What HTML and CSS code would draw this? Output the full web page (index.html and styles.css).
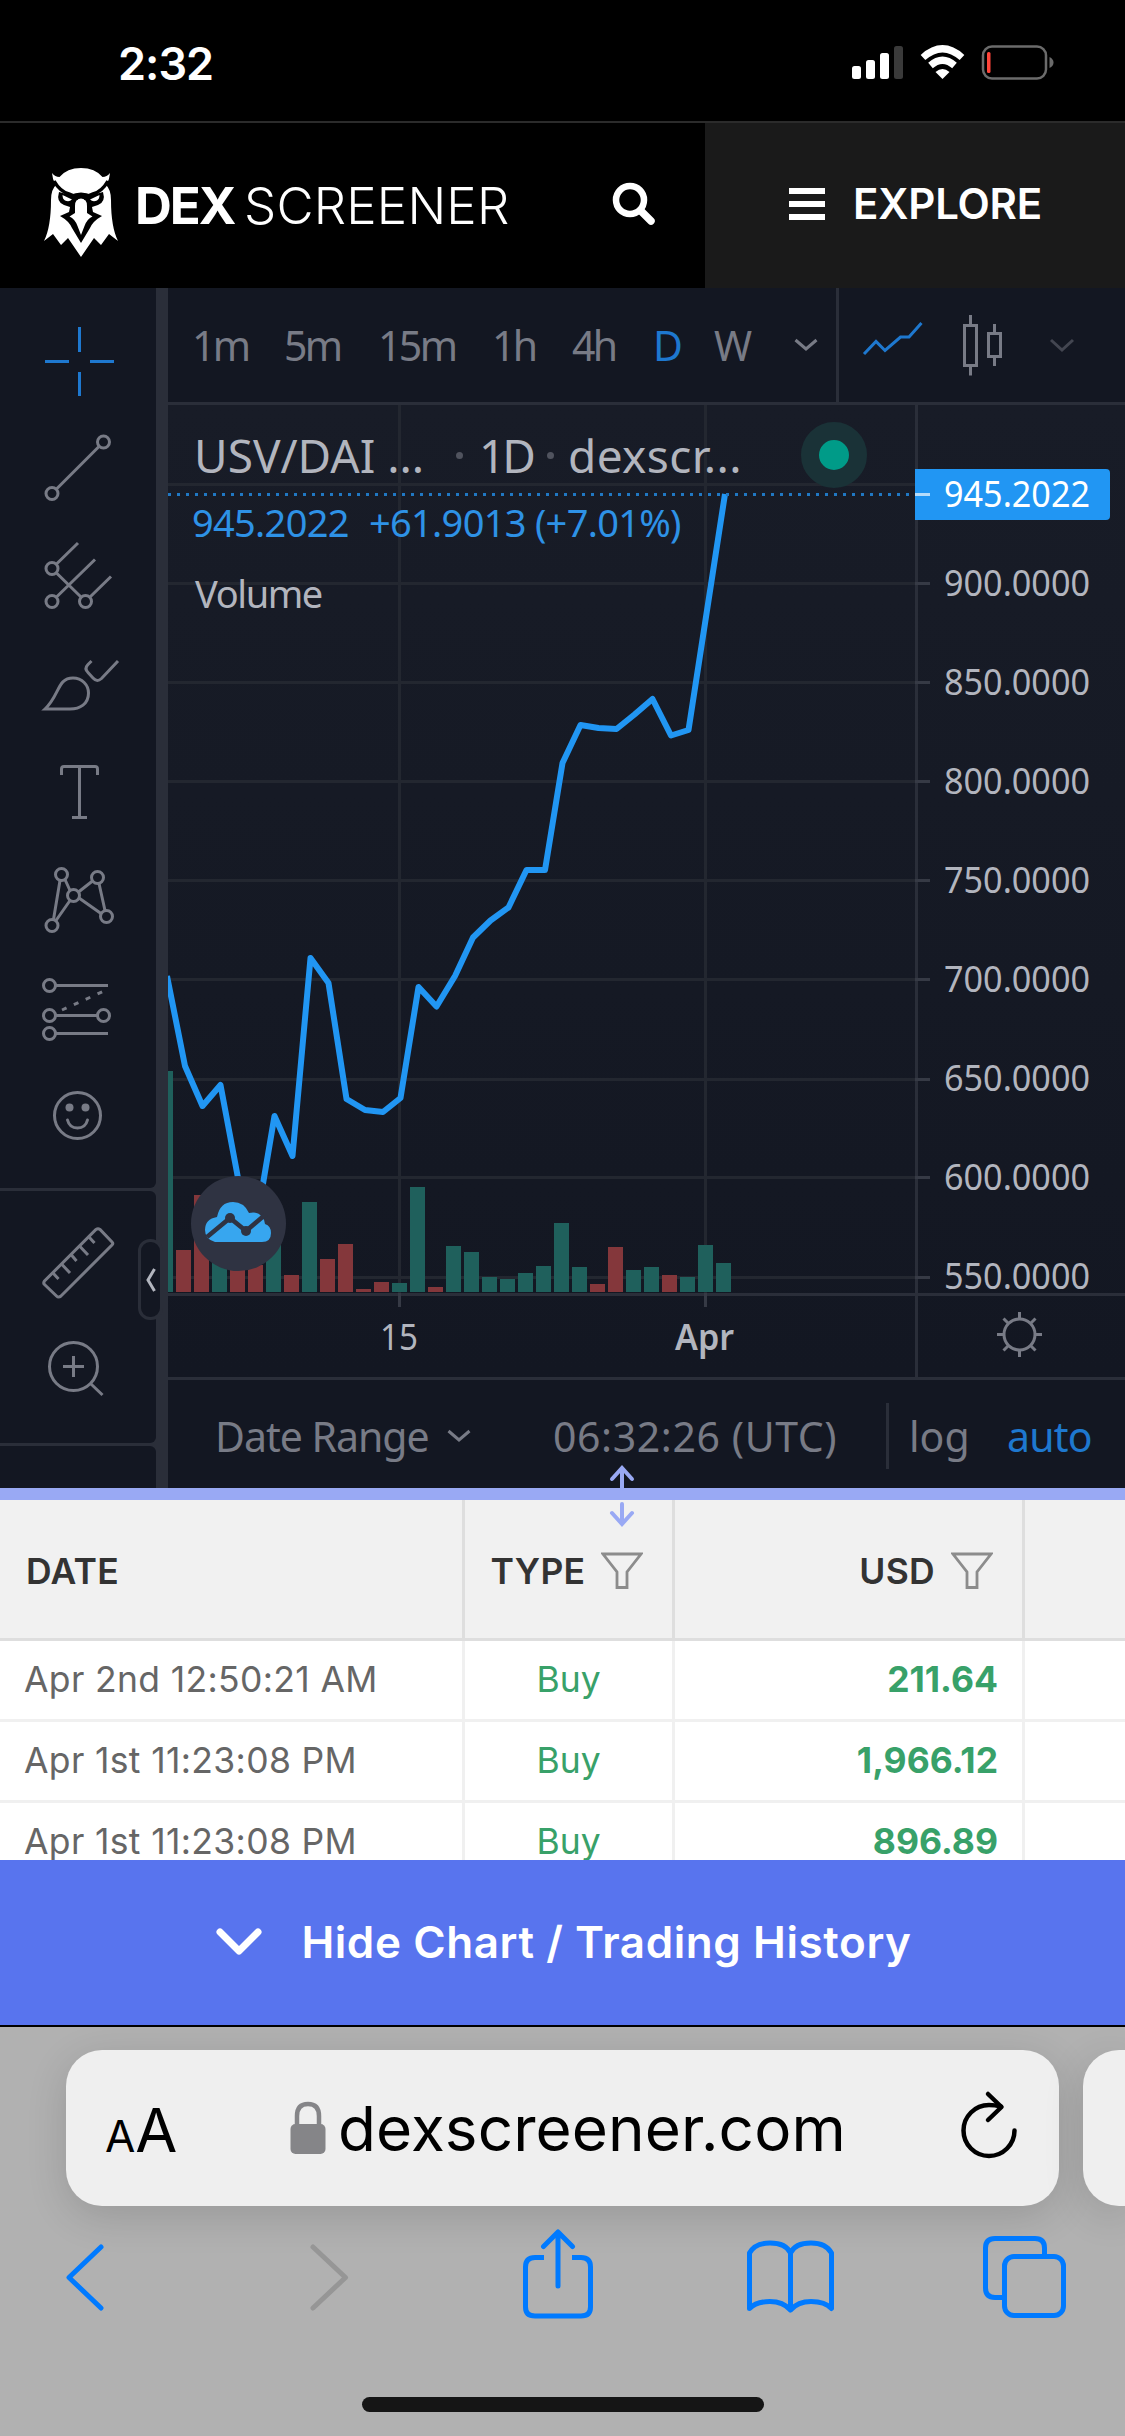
FILE: index.html
```html
<!DOCTYPE html>
<html lang="en">
<head>
    <meta charset="UTF-8">
    <meta name="viewport" content="width=device-width, initial-scale=1.0">
    <title>DEX Screener</title>
    <link rel="stylesheet" href="styles.css">
</head>
<body>

    <div class="status-bar">
        <span class="time">2:32</span>
        <svg class="status-icons" width="204" height="40" viewBox="850 44 204 40">
            <g fill="#fff">
                <rect x="852" y="67" width="9" height="13" rx="2.5"/>
                <rect x="866" y="61" width="9" height="19" rx="2.5"/>
                <rect x="880" y="54" width="9" height="26" rx="2.5"/>
                <rect x="894" y="47" width="9" height="33" rx="2.5" fill="#3a3a3a"/>
                <path d="M942.500 80 L935.500 73 Q942.500 67 949.500 73 Z"/>
            </g>
            <path d="M923 58.500 Q942.500 41 962 58.500" fill="none" stroke="#fff" stroke-width="7"/>
            <path d="M930.500 66.500 Q942.500 56 954.500 66.500" fill="none" stroke="#fff" stroke-width="7"/>
            <rect x="983" y="47.500" width="63" height="32" rx="9" fill="none" stroke="#6b6b6b" stroke-width="2.500"/>
            <rect x="987" y="53" width="3.500" height="21" rx="1.500" fill="#ff453a"/>
            <path d="M1049.500 58 Q1053.500 60 1053.500 63.500 Q1053.500 67 1049.500 69 Z" fill="#6b6b6b"/>
        </svg>
    </div>

    <header class="header">
        <svg class="owl" width="76" height="92" viewBox="43 166 76 92">
            <path d="M52 173 Q55 177 59.500 177 Q67 168 81 168 Q95 168 102.500 177 Q107 177 110 173 Q109 187 98 191.500 Q91 194 87 197 Q81 191.500 75 197 Q71 194 64 191.500 Q53 187 52 173 Z" fill="#fff"/>
            <path d="M57 184 Q62 193 70 196 L76 199 H86 L92 196 Q100 193 105 184 Q111 189 111 200 Q111 227 118 241 L109 234 L101 245 L94 238 L81 257 L68 238 L61 245 L53 234 L44 241 Q51 227 51 200 Q51 189 57 184 Z" fill="#fff"/>
            <path d="M59 192 Q56 202 64 205 L70 207 L69 212 L60 216 Q69 221 72 228 L81 243 L90 228 Q93 221 102 216 L93 212 L92 207 L98 205 Q106 202 103 192 L92 195 Q81 190 70 195 Z"/>
            <path d="M62.500 195 L72 199.500 Q69 202.500 65 200.500 Q62.500 199 62.500 195 Z M99.500 195 L90 199.500 Q93 202.500 97 200.500 Q99.500 199 99.500 195 Z" fill="#fff"/>
            <path d="M81 198.500 Q75 198.500 75 206 V213 L69.500 216.500 Q75 219 77.500 226 L81 235 L84.500 226 Q87 219 92.500 216.500 L87 213 V206 Q87 198.500 81 198.500 Z" fill="#fff"/>
            <path d="M54 181 Q60 191.500 69 194 Q74 195.500 77 198 Q81 194.500 85 198 Q88 195.500 93 194 Q102 191.500 108 181" fill="none" stroke="#000" stroke-width="3.500"/>
        </svg>
        <span class="brand"><b>DEX</b><span class="brand-thin">SCREENER</span></span>
        <svg class="search" width="46" height="46" viewBox="0 0 46 46" fill="none" stroke="#fff">
            <circle cx="19" cy="19" r="14" stroke-width="6.500"/>
            <path d="M30 30 L40 40" stroke-width="7.500" stroke-linecap="round"/>
        </svg>
        <div class="explore">
            <svg width="36" height="34" viewBox="0 0 36 34" fill="#fff">
                <rect y="1" width="36" height="6"/>
                <rect y="14" width="36" height="6"/>
                <rect y="27" width="36" height="6"/>
            </svg>
            <span>EXPLORE</span>
        </div>
    </header>

    <main class="chart">
        <aside class="tools">
            <div class="tool-group group-main">
                <svg width="156" height="900" viewBox="0 288 156 900" fill="none" stroke="#787b86" stroke-width="3">
                    <!-- crosshair -->
                    <path d="M45 361.500H69 M90 361.500H114 M79.500 327V352 M79.500 372V396" stroke="#1e78cf"/>
                    <!-- trend line -->
                    <circle cx="52" cy="493.500" r="6"/><circle cx="103.500" cy="442" r="6"/>
                    <path d="M56.500 489 L99 446.500"/>
                    <!-- pitchfork -->
                    <circle cx="52" cy="568.500" r="6"/><circle cx="52" cy="601.500" r="6"/><circle cx="85.500" cy="601.500" r="6"/>
                    <path d="M56.500 564 L78 543 M56.500 573 L81 597 M56.500 597 L95 559.500 M90 597 L111 576.500"/>
                    <!-- brush -->
                    <path d="M45 709 C60 695 57 678 73 678 C82 678 88.500 685 88.500 693 C88.500 704 80 709 70 709 Z"/>
                    <path d="M91.500 661 L88 664.500 Q84 668.500 88 672.500 L93 678 Q97 682.500 101.500 678.500 L118 661"/>
                    <!-- text -->
                    <path d="M61.500 775 V769 Q61.500 766.500 64 766.500 H95 Q97.500 766.500 97.500 769 V775 M79.500 766.500 V817.500 M72 817.500 H87"/>
                    <!-- pattern -->
                    <circle cx="61.500" cy="874.500" r="6"/><circle cx="97.500" cy="877.500" r="6"/><circle cx="73.500" cy="895.500" r="6"/><circle cx="52" cy="925.500" r="6"/><circle cx="106.500" cy="916.500" r="6"/>
                    <path d="M60 880.500 L53.500 919.500 M65 879.500 L70 890.500 M78.500 892 L92.500 881 M99 883.500 L105 910.500 M56 920.500 L70 900.500 M79 898 L101 913.500"/>
                    <!-- fib lines -->
                    <circle cx="49.500" cy="985.500" r="6"/><circle cx="49.500" cy="1015.500" r="6"/><circle cx="103.500" cy="1015.500" r="6"/><circle cx="49.500" cy="1033.500" r="6"/>
                    <path d="M55.500 985.500H108 M55.500 1015.500H97.500 M55.500 1033.500H108"/>
                    <path d="M62 1010 L103 991.500" stroke-dasharray="5 8"/>
                    <!-- smiley -->
                    <circle cx="77.500" cy="1115.500" r="23"/>
                    <path d="M67.500 1120 Q69.500 1128 77.500 1128 Q85.500 1128 87.500 1120" stroke-linecap="round"/>
                    <circle cx="69.500" cy="1107.500" r="4" fill="#787b86" stroke="none"/><circle cx="85.500" cy="1107.500" r="4" fill="#787b86" stroke="none"/>
                </svg>
            </div>
            <div class="tool-group group-measure">
                <svg width="156" height="252" viewBox="0 1191 156 252" fill="none" stroke="#787b86" stroke-width="3">
                    <!-- ruler -->
                    <path d="M96 1229.500 Q98 1228 100 1229.500 L112 1242 Q113.500 1243.500 112 1245 L61 1296 Q58.500 1298 56.500 1296 L44.500 1284.500 Q43 1283 44.500 1281 Z"/>
                    <path d="M53 1273 L58.500 1279 M61.500 1264 L70 1273 M71 1254.500 L76.500 1261 M79.500 1246 L88 1255 M89 1237 L94.500 1243"/>
                    <!-- zoom in -->
                    <circle cx="73.500" cy="1366.500" r="24"/>
                    <path d="M63 1366.500H84 M73.500 1356V1377 M91 1384 L102.500 1395"/>
                </svg>
            </div>
            <div class="tool-group group-last"></div>
            <div class="collapse">
                <svg width="10" height="24" viewBox="0 0 10 24" fill="none" stroke="#b2b5be" stroke-width="3"><path d="M8.500 1 L2 12 L8.500 23"/></svg>
            </div>
        </aside>

        <section class="panel">
            <div class="intervals">
                <span>1m</span>
                <span>5m</span>
                <span>15m</span>
                <span>1h</span>
                <span>4h</span>
                <span class="active">D</span>
                <span>W</span>
                <svg width="24" height="14" viewBox="0 0 24 14" fill="none" stroke="#787b86" stroke-width="3"><path d="M1.500 2 L12 11 L22.500 2"/></svg>
                <div class="chart-type">
                    <svg width="253" height="114" viewBox="839 288 253 114" fill="none" stroke="#787b86" stroke-width="3">
                        <path d="M864 354 L876 341.500 L885 350.500 L900.500 337 H909 L921.500 323" stroke="#1e78cf"/>
                        <path d="M970.500 315V325 M970.500 366V375.500 M964.500 325.500H976.500V365.500H964.500Z M994.500 324V333 M994.500 357V366 M988.500 333.500H1000.500V356.500H988.500Z"/>
                        <path d="M1051 340 L1062 350 L1073 340" stroke="#434651"/>
                    </svg>
                </div>
            </div>

            <div class="plot">
                <svg width="957" height="972" viewBox="168 405 957 972">
                    <!-- grid -->
                    <g fill="#232730">
                        <rect x="398" y="405" width="3" height="888"/>
                        <rect x="704" y="405" width="3" height="888"/>
                        <rect x="168" y="483" width="747" height="3"/>
                        <rect x="168" y="582" width="747" height="3"/>
                        <rect x="168" y="681" width="747" height="3"/>
                        <rect x="168" y="780" width="747" height="3"/>
                        <rect x="168" y="879" width="747" height="3"/>
                        <rect x="168" y="978" width="747" height="3"/>
                        <rect x="168" y="1078" width="747" height="3"/>
                        <rect x="168" y="1176" width="747" height="3"/>
                        <rect x="168" y="1276" width="747" height="3"/>
                    </g>
                    <!-- price line -->
                    <path d="M167 976 L185 1066 L202.500 1106 L220.500 1085 L238 1178 L256 1225 L274.500 1116 L292.500 1156 L310.500 958 L328.500 983 L346.500 1099 L365 1110 L383 1112 L400.500 1098 L418.500 987 L436.500 1006.500 L455 976 L473 937.500 L490.500 920.500 L508.500 907.500 L526.500 870 L545 870 L562.500 763 L580.500 725 L598.500 728 L616.500 729 L634.500 714.500 L652.500 699 L671 735.500 L688.500 730 L725 494" fill="none" stroke="#2196f3" stroke-width="6" stroke-linejoin="round"/>
                    <path d="M168 494.500H915" stroke="#2078c4" stroke-width="3" stroke-dasharray="3 6"/>
                    <!-- volume -->
                    <path fill="#1f605c" d="M168 1071h5v221h-5zM212 1240h15v52h-15zM266 1230h15v62h-15zM302 1202h15v90h-15zM392 1283h15v9h-15zM410 1187h15v105h-15zM446 1246h15v46h-15zM464 1252h15v40h-15zM482 1277h15v15h-15zM500 1279h15v13h-15zM518 1273h15v19h-15zM536 1266h15v26h-15zM554 1223h15v69h-15zM572 1267h15v25h-15zM626 1270h15v22h-15zM644 1267h15v25h-15zM680 1277h15v15h-15zM698 1245h15v47h-15zM716 1263h15v29h-15z"/>
                    <path fill="#84373b" d="M176 1250h15v42h-15zM194 1195h15v97h-15zM230 1260h15v32h-15zM248 1265h15v27h-15zM284 1275h15v17h-15zM320 1259h15v33h-15zM338 1244h15v48h-15zM356 1289h15v3h-15zM374 1282h15v10h-15zM428 1287h15v5h-15zM590 1284h15v8h-15zM608 1247h15v45h-15zM662 1275h15v17h-15z"/>
                    <!-- axes -->
                    <g fill="#2a2e39">
                        <rect x="915" y="405" width="3" height="972"/>
                        <rect x="168" y="1293" width="957" height="3"/>
                    </g>
                    <path d="M399.500 1293V1307 M705.500 1293V1307 M915 583.500H930 M915 682.500H930 M915 781.500H930 M915 880.500H930 M915 979.500H930 M915 1079.500H930 M915 1177.500H930 M915 1277.500H930" stroke="#363a45" stroke-width="3"/>
                    <g class="axis-text">
                        <text x="944" y="596" textLength="146" lengthAdjust="spacingAndGlyphs">900.0000</text>
                        <text x="944" y="695" textLength="146" lengthAdjust="spacingAndGlyphs">850.0000</text>
                        <text x="944" y="794" textLength="146" lengthAdjust="spacingAndGlyphs">800.0000</text>
                        <text x="944" y="893" textLength="146" lengthAdjust="spacingAndGlyphs">750.0000</text>
                        <text x="944" y="992" textLength="146" lengthAdjust="spacingAndGlyphs">700.0000</text>
                        <text x="944" y="1091" textLength="146" lengthAdjust="spacingAndGlyphs">650.0000</text>
                        <text x="944" y="1190" textLength="146" lengthAdjust="spacingAndGlyphs">600.0000</text>
                        <text x="944" y="1289" textLength="146" lengthAdjust="spacingAndGlyphs">550.0000</text>
                        <text x="380" y="1350" textLength="38" lengthAdjust="spacingAndGlyphs">15</text>
                        <text x="675" y="1350" class="bold" textLength="59" lengthAdjust="spacingAndGlyphs">Apr</text>
                    </g>
                    <!-- last price -->
                    <path d="M915 469H1106Q1110 469 1110 473V516Q1110 520 1106 520H915Z" fill="#2196f3"/>
                    <path d="M915 494.500H930" stroke="#b5dcfb" stroke-width="3"/>
                    <text x="944" y="507" class="axis-text last" textLength="146" lengthAdjust="spacingAndGlyphs">945.2022</text>
                    <!-- settings -->
                    <g fill="none" stroke="#787b86" stroke-width="3">
                        <circle cx="1019.500" cy="1334.500" r="15.500"/>
                        <path d="M1019.500 1312V1319 M1019.500 1350V1357 M997 1334.500H1004 M1035 1334.500H1042 M1003.500 1318.500L1008.500 1323.500 M1030.500 1345.500L1035.500 1350.500 M1003.500 1350.500L1008.500 1345.500 M1030.500 1323.500L1035.500 1318.500"/>
                    </g>
                    <!-- TradingView badge -->
                    <circle cx="238.500" cy="1223.500" r="47.500" fill="#2f3342"/>
                    <path d="M215 1242 Q205 1239 205 1230 Q205 1219 217 1217 Q220 1202 233 1202 Q244 1202 249 1213 Q258 1211 262 1217 Q265 1220 265 1224 Q271 1226 271 1233 Q271 1242 262 1242 Z" fill="#37a6ef"/>
                    <path d="M207 1237 L230 1218 L246 1231 L266 1214" fill="none" stroke="#2f3342" stroke-width="4.500"/>
                    <circle cx="230" cy="1218" r="5" fill="#2f3342"/><circle cx="246" cy="1231" r="5" fill="#2f3342"/>
                </svg>

                <div class="legend">
                    <div class="legend-title">
                        <span class="symbol">USV/DAI ...</span>
                        <i class="dot"></i>
                        <span class="res">1D</span>
                        <i class="dot"></i>
                        <span class="source">dexscr...</span>
                        <i class="live"></i>
                    </div>
                    <div class="legend-values">
                        <span class="last-value">945.2022</span>
                        <span class="change">+61.9013 (+7.01%)</span>
                    </div>
                    <div class="legend-volume">Volume</div>
                </div>
            </div>

            <div class="chart-footer">
                <span class="range">Date Range</span>
                <svg class="range-arrow" width="24" height="14" viewBox="0 0 24 14" fill="none" stroke="#787b86" stroke-width="3"><path d="M1.500 2 L12 11 L22.500 2"/></svg>
                <span class="clock">06:32:26 (UTC)</span>
                <span class="log">log</span>
                <span class="auto">auto</span>
            </div>
        </section>
    </main>

    <div class="resizer">
        <svg class="resize-arrows" width="28" height="64" viewBox="0 0 28 64" fill="none" stroke="#99a9f4" stroke-width="4" stroke-linecap="round">
            <path d="M14 4V25 M4 15L14 4L24 15"/>
            <path d="M14 40V59 M4 49L14 60L24 49"/>
        </svg>
    </div>

    <section class="trades">
        <div class="row head">
            <div class="cell">DATE</div>
            <div class="cell type">TYPE
                <svg width="42" height="38" viewBox="0 0 42 38" fill="none" stroke="#8c8c8c" stroke-width="2.800"><path d="M2 2H40L26 20V35.500H16V20Z"/></svg>
            </div>
            <div class="cell usd">USD
                <svg width="42" height="38" viewBox="0 0 42 38" fill="none" stroke="#8c8c8c" stroke-width="2.800"><path d="M2 2H40L26 20V35.500H16V20Z"/></svg>
            </div>
            <div class="cell"></div>
        </div>
        <div class="row">
            <div class="cell date">Apr 2nd 12:50:21 AM</div>
            <div class="cell type">Buy</div>
            <div class="cell usd">211.64</div>
            <div class="cell"></div>
        </div>
        <div class="row">
            <div class="cell date">Apr 1st 11:23:08 PM</div>
            <div class="cell type">Buy</div>
            <div class="cell usd">1,966.12</div>
            <div class="cell"></div>
        </div>
        <div class="row">
            <div class="cell date">Apr 1st 11:23:08 PM</div>
            <div class="cell type">Buy</div>
            <div class="cell usd">896.89</div>
            <div class="cell"></div>
        </div>
    </section>

    <button class="hide-btn">
        <svg width="48" height="30" viewBox="0 0 48 30" fill="none" stroke="#fff" stroke-width="7" stroke-linecap="round" stroke-linejoin="round"><path d="M5 5L24 24L43 5"/></svg>
        <span>Hide Chart / Trading History</span>
    </button>

    <footer class="browser">
        <div class="tabs">
            <div class="address">
                <span class="aa"><small>A</small>A</span>
                <svg class="lock" width="36" height="54" viewBox="0 0 36 54">
                    <path d="M7 25V15Q7 3 18 3Q29 3 29 15V25" fill="none" stroke="#858588" stroke-width="4.500"/>
                    <rect x="0.500" y="23" width="35" height="30" rx="5" fill="#858588"/>
                </svg>
                <span class="domain">dexscreener.com</span>
                <svg class="reload" width="58" height="70" viewBox="960 2090 58 70" fill="none" stroke="#000" stroke-width="4.500" stroke-linecap="round" stroke-linejoin="round">
                    <path d="M1001 2106.500 Q995 2105 989 2105 A25.500 25.500 0 1 0 1014.500 2130.500"/>
                    <path d="M988 2094 L1001.500 2107 L988 2120"/>
                </svg>
            </div>
            <div class="address next-tab"></div>
        </div>
        <nav class="nav">
            <svg width="1125" height="100" viewBox="0 2225 1125 100" fill="none" stroke="#007aff" stroke-width="5" stroke-linecap="round" stroke-linejoin="round">
                <path d="M101 2247L69 2277.500L101 2308"/>
                <path d="M313 2247L345.500 2277.500L313 2308" stroke="#969696"/>
                <!-- share -->
                <path d="M544 2257.500H535Q525.500 2257.500 525.500 2267V2307Q525.500 2316 535 2316H581Q590.500 2316 590.500 2307V2267Q590.500 2257.500 581 2257.500H572" stroke-linecap="butt"/>
                <path d="M558 2286V2233 M543.500 2246.500L558 2232L572.500 2246.500"/>
                <!-- bookmarks -->
                <path d="M790.500 2310V2253 Q786 2243 770 2243 Q755 2243 749.500 2253V2308.500 Q756 2301.500 770 2301.500 Q783 2301.500 790.500 2310 Q798 2301.500 811 2301.500 Q825 2301.500 831.500 2308.500V2253 Q826 2243 811 2243 Q795 2243 790.500 2253"/>
                <!-- tabs -->
                <path d="M1003 2297.500H995Q985.500 2297.500 985.500 2288V2248Q985.500 2238.500 995 2238.500H1035Q1044.500 2238.500 1044.500 2248V2256" stroke-linecap="butt"/>
                <rect x="1004.500" y="2256.500" width="59" height="59" rx="9.500"/>
            </svg>
        </nav>
        <div class="home"></div>
    </footer>

</body>
</html>
```

FILE: styles.css
```css
* {
    box-sizing: border-box;
}
body {
    margin: 0;
    width: 1125px;
    height: 2436px;
    overflow: hidden;
    font-family: 'Inter', sans-serif;
    background: #000;
}
svg {
    display: block;
    flex-shrink: 0;
}
span {
    white-space: nowrap;
}

/* status bar + header */
.status-bar {
    height: 123px;
    padding: 5px 71px 0 118px;
    display: flex;
    align-items: center;
    justify-content: space-between;
    color: #fff;
    border-bottom: 2px solid #2b2b2b;
}
.time {
    font-size: 45px;
    font-weight: 600;
    letter-spacing: -1px;
}
.header {
    height: 165px;
    display: flex;
    align-items: center;
    color: #fff;
}
.owl {
    margin: 13px 0 0 43px;
}
.brand {
    width: 492px;
    padding-left: 16px;
    font-size: 51px;
    display: flex;
    letter-spacing: -2px;
}
.brand b {
    width: 109px;
    font-weight: 700;
}
.brand-thin {
    font-weight: 300;
    letter-spacing: 0.2px;
}
.search {
    margin: 0 48px 3px 0;
}
.explore {
    width: 420px;
    height: 165px;
    padding: 0 0 4px 84px;
    display: flex;
    align-items: center;
    gap: 28px;
    background: #1a1a1a;
    font-size: 42px;
    font-weight: 600;
    letter-spacing: -0.2px;
}

/* chart */
.chart {
    height: 1200px;
    display: flex;
    background: #131722;
    font-family: 'Noto Sans', sans-serif;
}
.tools {
    position: relative;
    width: 168px;
    padding-right: 12px;
    display: flex;
    flex-direction: column;
    gap: 3px;
    background: #2a2e39;
}
.tool-group {
    background: #131722;
}
.group-main {
    height: 900px;
    border-radius: 0 0 6px 0;
}
.group-measure {
    height: 252px;
    border-radius: 0 6px 6px 0;
}
.group-last {
    flex: 1;
    border-radius: 0 6px 0 0;
}
.collapse {
    position: absolute;
    left: 138px;
    top: 951px;
    width: 25px;
    height: 81px;
    display: flex;
    align-items: center;
    justify-content: center;
    background: #131722;
    border: 3px solid #2a2e39;
    border-radius: 12px;
}
.panel {
    width: 957px;
}
.intervals {
    height: 117px;
    padding-left: 24px;
    display: grid;
    grid-template-columns: 92px 94px 114px 80px 81px 61px 80px 42px 1fr;
    align-items: center;
    border-bottom: 3px solid #2a2e39;
    color: #787b86;
    font-size: 41px;
    letter-spacing: -2.6px;
}
.intervals .active {
    color: #1e78cf;
}
.chart-type {
    height: 114px;
    border-left: 3px solid #2a2e39;
}
.plot {
    position: relative;
    height: 972px;
    background: linear-gradient(#181c27, #131722);
}
.axis-text {
    font-size: 36px;
    fill: #b2b5be;
}
.axis-text .bold {
    font-weight: 600;
}
.last {
    fill: #fff;
}

/* legend lies over the plot */
.legend {
    position: absolute;
    left: 26px;
    top: 17px;
    color: #b2b5be;
}
.legend-title {
    height: 66px;
    display: flex;
    align-items: center;
    font-size: 46px;
}
.symbol {
    width: 262px;
}
.dot {
    width: 7px;
    height: 7px;
    border-radius: 50%;
    background: #50535e;
}
.res {
    width: 84px;
    padding-left: 16px;
    letter-spacing: -3px;
}
.source {
    padding-left: 14px;
    width: 247px;
    letter-spacing: 0.4px;
}
.live {
    width: 66px;
    height: 66px;
    border: 18px solid #1a3237;
    border-radius: 50%;
    background: #009b88;
}
.legend-values {
    height: 68px;
    display: flex;
    align-items: center;
    color: #2e92e6;
    font-size: 38px;
    letter-spacing: -0.7px;
}
.last-value {
    width: 175px;
    text-indent: -2px;
}
.legend-volume {
    height: 74px;
    line-height: 74px;
    padding-left: 1px;
    font-size: 38px;
    letter-spacing: -1.4px;
}
.chart-footer {
    height: 111px;
    padding: 4px 0 0 47px;
    display: flex;
    align-items: center;
    border-top: 3px solid #2a2e39;
    color: #787b86;
    font-size: 41px;
}
.range {
    width: 232px;
    letter-spacing: -1px;
}
.clock {
    width: 333px;
    margin-left: 82px;
    letter-spacing: 0.6px;
}
.log {
    height: 66px;
    line-height: 66px;
    width: 121px;
    padding-left: 20px;
    border-left: 3px solid #2a2e39;
}
.auto {
    color: #1e78cf;
    letter-spacing: -0.8px;
}

/* chart / table divider */
.resizer {
    position: relative;
    height: 12px;
    background: #99a9f4;
}
.resize-arrows {
    position: absolute;
    left: 608px;
    top: -24px;
}

/* trades */
.trades {
    height: 360px;
    overflow: hidden;
    background: #fff;
}
.row {
    height: 81px;
    display: grid;
    grid-template-columns: 465px 210px 350px 1fr;
    border-bottom: 3px solid #f0f0f0;
    font-size: 35.5px;
    color: #666;
}
.cell {
    display: flex;
    align-items: center;
    padding: 0 24px 2px;
    border-right: 3px solid #f0f0f0;
    white-space: nowrap;
}
.cell:last-child {
    border-right: none;
}
.date {
    letter-spacing: 0.35px;
}
.type {
    justify-content: center;
    color: #38a169;
}
.usd {
    justify-content: flex-end;
    color: #38a169;
    font-weight: 700;
}
.head {
    height: 141px;
    background: #f1f1f1;
    border-color: #dedede;
    font-weight: 600;
}
.head .cell {
    gap: 16px;
    padding: 4px 29px 0 26px;
    border-color: #dedede;
    color: #333;
    font-weight: 600;
    letter-spacing: 0.3px;
}
.hide-btn {
    width: 100%;
    height: 165px;
    padding: 0 0 2px 2px;
    display: flex;
    align-items: center;
    justify-content: center;
    gap: 38px;
    border: none;
    background: #5874ee;
    color: #fff;
    font-family: 'Inter', sans-serif;
    font-size: 44px;
    font-weight: 600;
    letter-spacing: 0.58px;
}

/* browser bars */
.browser {
    height: 411px;
    border-top: 2px solid #000;
    background: #b1b1b1;
}
.tabs {
    padding: 23px 0 0 66px;
    display: flex;
    gap: 24px;
    height: 198px;
}
.address {
    width: 993px;
    height: 156px;
    flex-shrink: 0;
    display: flex;
    align-items: center;
    background: #efefef;
    border-radius: 36px;
    box-shadow: 0 10px 40px rgba(0, 0, 0, 0.14);
}
.next-tab {
    width: 42px;
    border-radius: 36px 0 0 36px;
}
.aa {
    width: 224px;
    padding: 4px 0 0 39px;
    font-size: 61px;
}
.aa small {
    font-size: 44px;
}
.domain {
    width: 634px;
    padding: 1px 0 0 12px;
    font-size: 62px;
    letter-spacing: 0.1px;
}
.reload {
    margin-top: -6px;
}
.nav {
    height: 100px;
}
.home {
    width: 402px;
    height: 15px;
    margin: 72px auto 0;
    border-radius: 8px;
    background: #151515;
}
```
